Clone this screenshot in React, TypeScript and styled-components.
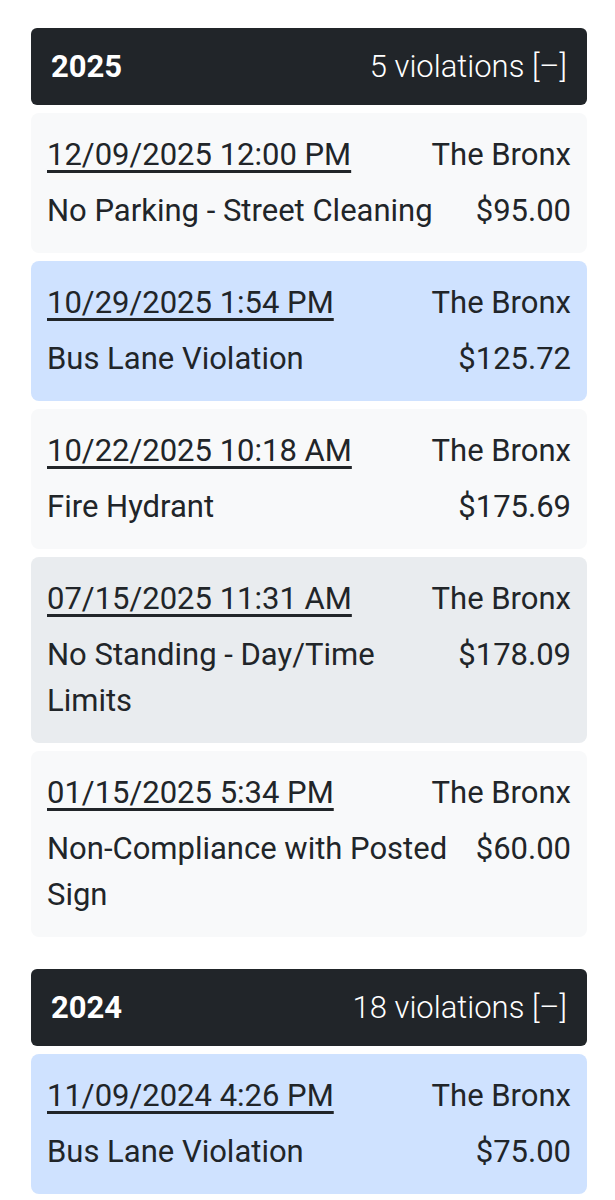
import React, { FC } from 'react';
import styled, { createGlobalStyle } from 'styled-components';

const GlobalStyle = createGlobalStyle`
  body {
    margin: 0;
    background: #ffffff;
    font-family: Roboto, "Liberation Sans", sans-serif;
    color: #212529;
  }
`;

type Tone = 'light' | 'blue' | 'gray';

interface Violation {
  date: string;
  borough: string;
  description: string;
  amount: string;
  tone: Tone;
}

interface YearGroup {
  year: string;
  count: number;
  violations: Violation[];
}

const groups: YearGroup[] = [
  {
    year: '2025',
    count: 5,
    violations: [
      { date: '12/09/2025 12:00 PM', borough: 'The Bronx', description: 'No Parking - Street Cleaning', amount: '$95.00', tone: 'light' },
      { date: '10/29/2025 1:54 PM', borough: 'The Bronx', description: 'Bus Lane Violation', amount: '$125.72', tone: 'blue' },
      { date: '10/22/2025 10:18 AM', borough: 'The Bronx', description: 'Fire Hydrant', amount: '$175.69', tone: 'light' },
      { date: '07/15/2025 11:31 AM', borough: 'The Bronx', description: 'No Standing - Day/Time Limits', amount: '$178.09', tone: 'gray' },
      { date: '01/15/2025 5:34 PM', borough: 'The Bronx', description: 'Non-Compliance with Posted Sign', amount: '$60.00', tone: 'light' },
    ],
  },
  {
    year: '2024',
    count: 18,
    violations: [
      { date: '11/09/2024 4:26 PM', borough: 'The Bronx', description: 'Bus Lane Violation', amount: '$75.00', tone: 'blue' },
    ],
  },
];

const toneColors: Record<Tone, string> = {
  light: '#f8f9fa',
  blue: '#cfe2ff',
  gray: '#e9ecef',
};

const Page = styled.div`
  padding: 28px 28px 0 31px;
  display: flex;
  flex-direction: column;
  gap: 32px;
`;

const Section = styled.section`
  display: flex;
  flex-direction: column;
  gap: 8px;
`;

const YearHeader = styled.div`
  display: flex;
  justify-content: space-between;
  align-items: center;
  background: #212529;
  color: #ffffff;
  border-radius: 6px;
  padding: 16px 20px 15px;
  font-size: 31px;
  line-height: 46px;
`;

const YearLabel = styled.span`
  font-weight: 700;
`;

const CountLabel = styled.span`
  font-weight: 300;
`;

const Card = styled.div<{ $tone: Tone }>`
  background: ${(p) => toneColors[p.$tone]};
  border-radius: 8px;
  padding: 19px 16px;
  display: flex;
  flex-direction: column;
  gap: 10px;
  font-size: 31px;
  line-height: 46px;
`;

const Row = styled.div`
  display: flex;
  justify-content: space-between;
  align-items: flex-start;
  gap: 24px;
`;

const DateLink = styled.a`
  color: #212529;
  text-decoration: underline;
  text-underline-offset: 5px;
  text-decoration-thickness: 3px;
`;

const Right = styled.span`
  white-space: nowrap;
  text-align: right;
`;

const App: FC = () => (
  <>
    <GlobalStyle />
    <Page>
      {groups.map((g) => (
        <Section key={g.year}>
          <YearHeader>
            <YearLabel>{g.year}</YearLabel>
            <CountLabel>{g.count} violations [–]</CountLabel>
          </YearHeader>
          {g.violations.map((v) => (
            <Card key={v.date} $tone={v.tone}>
              <Row>
                <DateLink href="#">{v.date}</DateLink>
                <Right>{v.borough}</Right>
              </Row>
              <Row>
                <span>{v.description}</span>
                <Right>{v.amount}</Right>
              </Row>
            </Card>
          ))}
        </Section>
      ))}
    </Page>
  </>
);

export default App;
